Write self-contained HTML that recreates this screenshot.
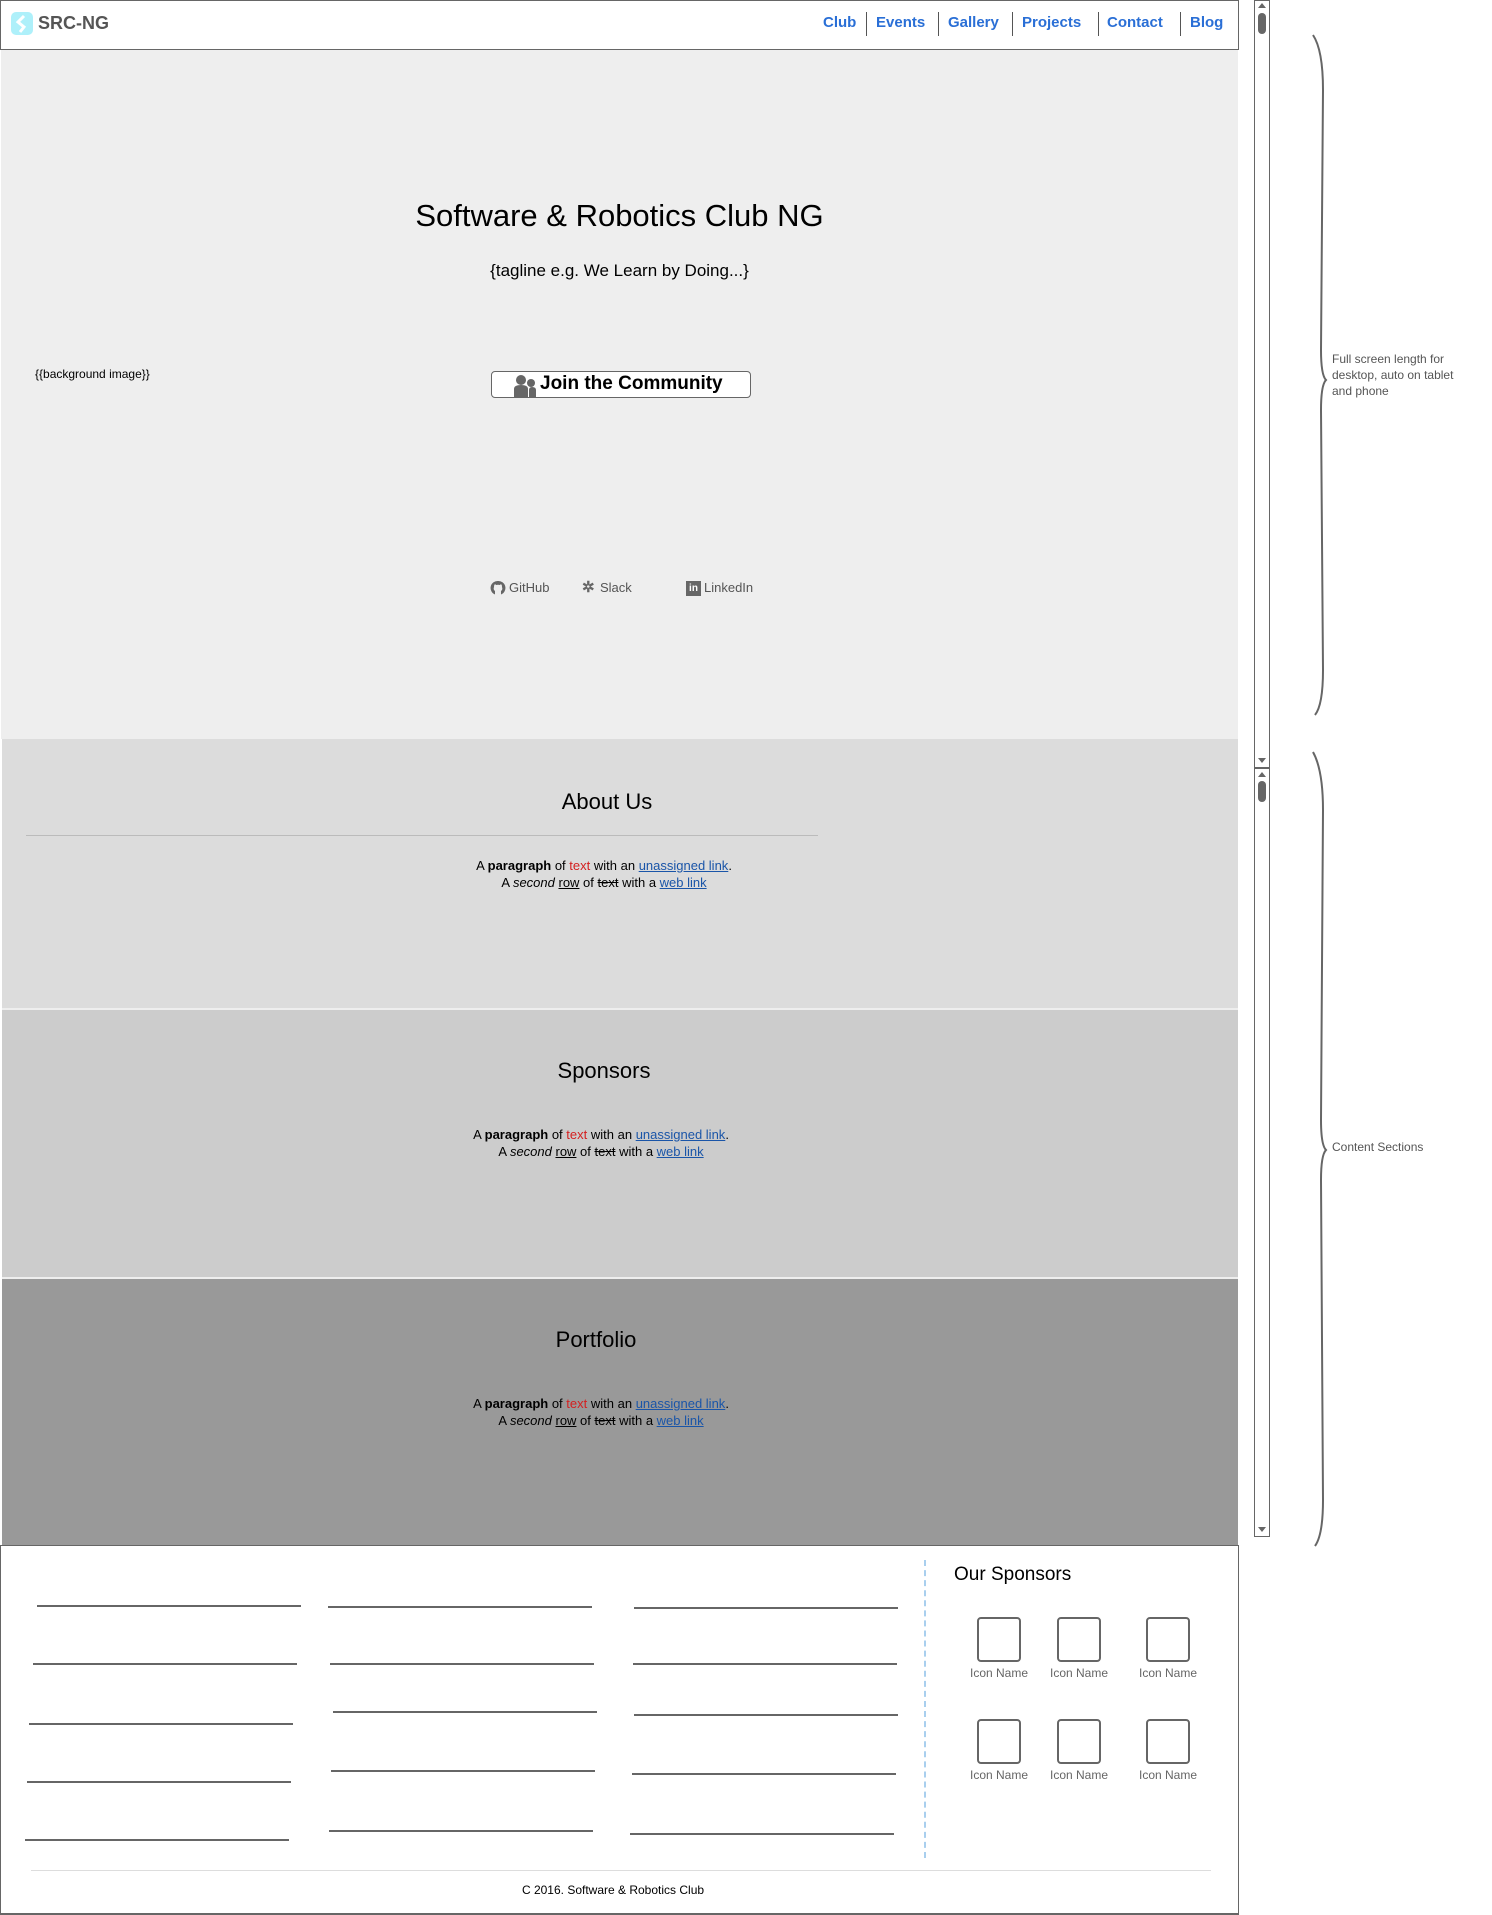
<!DOCTYPE html>
<html><head><meta charset="utf-8"><style>
*{margin:0;padding:0;box-sizing:border-box}
body{width:1492px;height:1915px;background:#fff;position:relative;overflow:hidden;font-family:"Liberation Sans",sans-serif;color:#000}
.a{position:absolute;white-space:nowrap}
.nav{color:#2a6fd6;font-weight:bold;font-size:15px;top:14px}
.sep{position:absolute;top:12px;width:1px;height:24px;background:#555}
.sec{position:absolute;left:2px;width:1236px}
.h2{position:absolute;width:100%;text-align:center;font-size:22px}
.p{position:absolute;width:100%;text-align:center;font-size:13px;line-height:17px}
.red{color:#d42020}.lk{color:#1a55a8;text-decoration:underline}
.fl{position:absolute;height:2px;background:#666;width:264px}
.box{position:absolute;width:44px;height:45px;border:2px solid #666;border-radius:4px}
.lbl{position:absolute;font-size:12px;color:#666;width:80px;text-align:center}
</style></head><body>
<!-- header -->
<div class="a" style="left:0;top:0;width:1239px;height:50px;border:1px solid #666;background:#fff"></div>
<div class="a" style="left:11px;top:12px;width:22px;height:23px;background:#aef0fa;border-radius:5px"></div>
<svg class="a" style="left:11px;top:12px" width="22" height="23"><path d="M13 4 L7 10 L13 15 L9 20" stroke="#fff" stroke-width="3" fill="none"/></svg>
<div class="a" style="left:38px;top:13px;font-size:18px;font-weight:bold;color:#555">SRC-NG</div>
<div class="a nav" style="left:823px">Club</div>
<div class="sep" style="left:866px"></div>
<div class="a nav" style="left:876px">Events</div>
<div class="sep" style="left:938px"></div>
<div class="a nav" style="left:948px">Gallery</div>
<div class="sep" style="left:1012px"></div>
<div class="a nav" style="left:1022px">Projects</div>
<div class="sep" style="left:1098px"></div>
<div class="a nav" style="left:1107px">Contact</div>
<div class="sep" style="left:1180px"></div>
<div class="a nav" style="left:1190px">Blog</div>
<!-- hero -->
<div class="a" style="left:1px;top:50px;width:1237px;height:689px;background:#eeeeee"></div>
<div class="a" style="left:0;top:198px;width:1239px;text-align:center;font-size:31px">Software &amp; Robotics Club NG</div>
<div class="a" style="left:0;top:261px;width:1239px;text-align:center;font-size:17px">{tagline e.g. We Learn by Doing...}</div>
<div class="a" style="left:35px;top:367px;font-size:12px">{{background image}}</div>
<div class="a" style="left:491px;top:371px;width:260px;height:27px;border:1px solid #666;border-radius:4px;background:#fff"></div>
<svg class="a" style="left:513px;top:374px" width="24" height="23"><circle cx="8" cy="6" r="5" fill="#666"/><path d="M1 23 V15 Q1 11 8 11 Q15 11 15 15 V23Z" fill="#666"/><circle cx="18" cy="9" r="4" fill="#666"/><path d="M16 23 V16 Q16 13 19 13 Q23 13 23 16 V23Z" fill="#666"/></svg>
<div class="a" style="left:540px;top:373px;font-size:19px;font-weight:bold">Join the Community</div>
<svg class="a" style="left:490px;top:580px" width="16" height="17"><path d="M8 1 A7 7 0 0 0 5 14.5 V11 Q3 10 4 7 Q4 5 5 4 L6 5 Q8 4.5 10 5 L11 4 Q12 5 12 7 Q13 10 11 11 V14.5 A7 7 0 0 0 8 1Z" fill="#666"/></svg>
<div class="a" style="left:509px;top:580px;font-size:13px;color:#555">GitHub</div>
<div class="a" style="left:582px;top:578px;font-size:15px;color:#666;font-weight:bold">✲</div>
<div class="a" style="left:600px;top:580px;font-size:13px;color:#555">Slack</div>
<div class="a" style="left:686px;top:581px;width:15px;height:15px;background:#666;color:#fff;font-size:10px;font-weight:bold;text-align:center;line-height:15px">in</div>
<div class="a" style="left:704px;top:580px;font-size:13px;color:#555">LinkedIn</div>
<!-- sections -->
<div class="sec" style="top:739px;height:269px;background:#dcdcdc">
 <div class="h2" style="top:50px;left:-13px">About Us</div>
 <div class="a" style="left:24px;top:96px;width:792px;height:1px;background:#bbb"></div>
 <div class="p" style="top:118px;left:-16px"><div>A <b>paragraph</b> of <span class="red">text</span> with an <span class="lk">unassigned link</span>.</div><div>A <i>second</i> <u>row</u> of <s>text</s> with a <span class="lk">web link</span></div></div>
</div>
<div class="a" style="left:2px;top:1008px;width:1236px;height:2px;background:#eee"></div>
<div class="sec" style="top:1010px;height:267px;background:#cccccc">
 <div class="h2" style="top:48px;left:-16px">Sponsors</div>
 <div class="p" style="top:116px;left:-19px"><div>A <b>paragraph</b> of <span class="red">text</span> with an <span class="lk">unassigned link</span>.</div><div>A <i>second</i> <u>row</u> of <s>text</s> with a <span class="lk">web link</span></div></div>
</div>
<div class="a" style="left:2px;top:1277px;width:1236px;height:2px;background:#eee"></div>
<div class="sec" style="top:1279px;height:267px;background:#999999">
 <div class="h2" style="top:48px;left:-24px">Portfolio</div>
 <div class="p" style="top:116px;left:-19px"><div>A <b>paragraph</b> of <span class="red">text</span> with an <span class="lk">unassigned link</span>.</div><div>A <i>second</i> <u>row</u> of <s>text</s> with a <span class="lk">web link</span></div></div>
</div>
<!-- footer -->
<div class="a" style="left:0;top:1545px;width:1239px;height:370px;border:1px solid #666;border-bottom:2px solid #666;background:#fff"></div>
<div class="fl" style="left:37px;top:1605px"></div><div class="fl" style="left:33px;top:1663px"></div><div class="fl" style="left:29px;top:1723px"></div><div class="fl" style="left:27px;top:1781px"></div><div class="fl" style="left:25px;top:1839px"></div>
<div class="fl" style="left:328px;top:1606px"></div><div class="fl" style="left:330px;top:1663px"></div><div class="fl" style="left:333px;top:1711px"></div><div class="fl" style="left:331px;top:1770px"></div><div class="fl" style="left:329px;top:1830px"></div>
<div class="fl" style="left:634px;top:1607px"></div><div class="fl" style="left:633px;top:1663px"></div><div class="fl" style="left:634px;top:1714px"></div><div class="fl" style="left:632px;top:1773px"></div><div class="fl" style="left:630px;top:1833px"></div>
<div class="a" style="left:924px;top:1560px;width:0;height:298px;border-left:2px dashed #a9cfee"></div>
<div class="a" style="left:954px;top:1564px;font-size:19px">Our Sponsors</div>
<div class="box" style="left:977px;top:1617px"></div><div class="box" style="left:1057px;top:1617px"></div><div class="box" style="left:1146px;top:1617px"></div>
<div class="lbl" style="left:959px;top:1666px">Icon Name</div><div class="lbl" style="left:1039px;top:1666px">Icon Name</div><div class="lbl" style="left:1128px;top:1666px">Icon Name</div>
<div class="box" style="left:977px;top:1719px"></div><div class="box" style="left:1057px;top:1719px"></div><div class="box" style="left:1146px;top:1719px"></div>
<div class="lbl" style="left:959px;top:1768px">Icon Name</div><div class="lbl" style="left:1039px;top:1768px">Icon Name</div><div class="lbl" style="left:1128px;top:1768px">Icon Name</div>
<div class="a" style="left:31px;top:1870px;width:1180px;height:1px;background:#ddd"></div>
<div class="a" style="left:0;top:1883px;width:1226px;text-align:center;font-size:12px">C 2016. Software &amp; Robotics Club</div>
<!-- annotations -->
<div class="a" style="left:1254px;top:0;width:16px;height:768px;border:1px solid #666;background:#fff"></div>
<div class="a" style="left:1254px;top:768px;width:16px;height:769px;border:1px solid #666;background:#fff"></div>
<div class="a" style="left:1258px;top:13px;width:8px;height:21px;border-radius:4px;background:#666"></div>
<div class="a" style="left:1258px;top:781px;width:8px;height:21px;border-radius:4px;background:#666"></div>
<svg class="a" style="left:1254px;top:0" width="16" height="1540"><path d="M4 8 L8 3 L12 8Z M4 758 L8 763 L12 758Z M4 777 L8 772 L12 777Z M4 1527 L8 1532 L12 1527Z" fill="#666"/></svg>
<svg class="a" style="left:1305px;top:30px" width="30" height="1520"><path d="M8 5 Q18 20 18 60 L16 320 Q16 345 21 350 Q16 355 16 380 L18 640 Q18 675 10 685" stroke="#666" stroke-width="2" fill="none"/><path d="M8 722 Q18 740 18 780 L16 1090 Q16 1115 21 1120 Q16 1125 16 1150 L18 1470 Q18 1505 10 1516" stroke="#666" stroke-width="2" fill="none"/></svg>
<div class="a" style="left:1332px;top:351px;font-size:12px;color:#555;line-height:16px">Full screen length for<br>desktop, auto on tablet<br>and phone</div>
<div class="a" style="left:1332px;top:1140px;font-size:12px;color:#555">Content Sections</div>
</body></html>
